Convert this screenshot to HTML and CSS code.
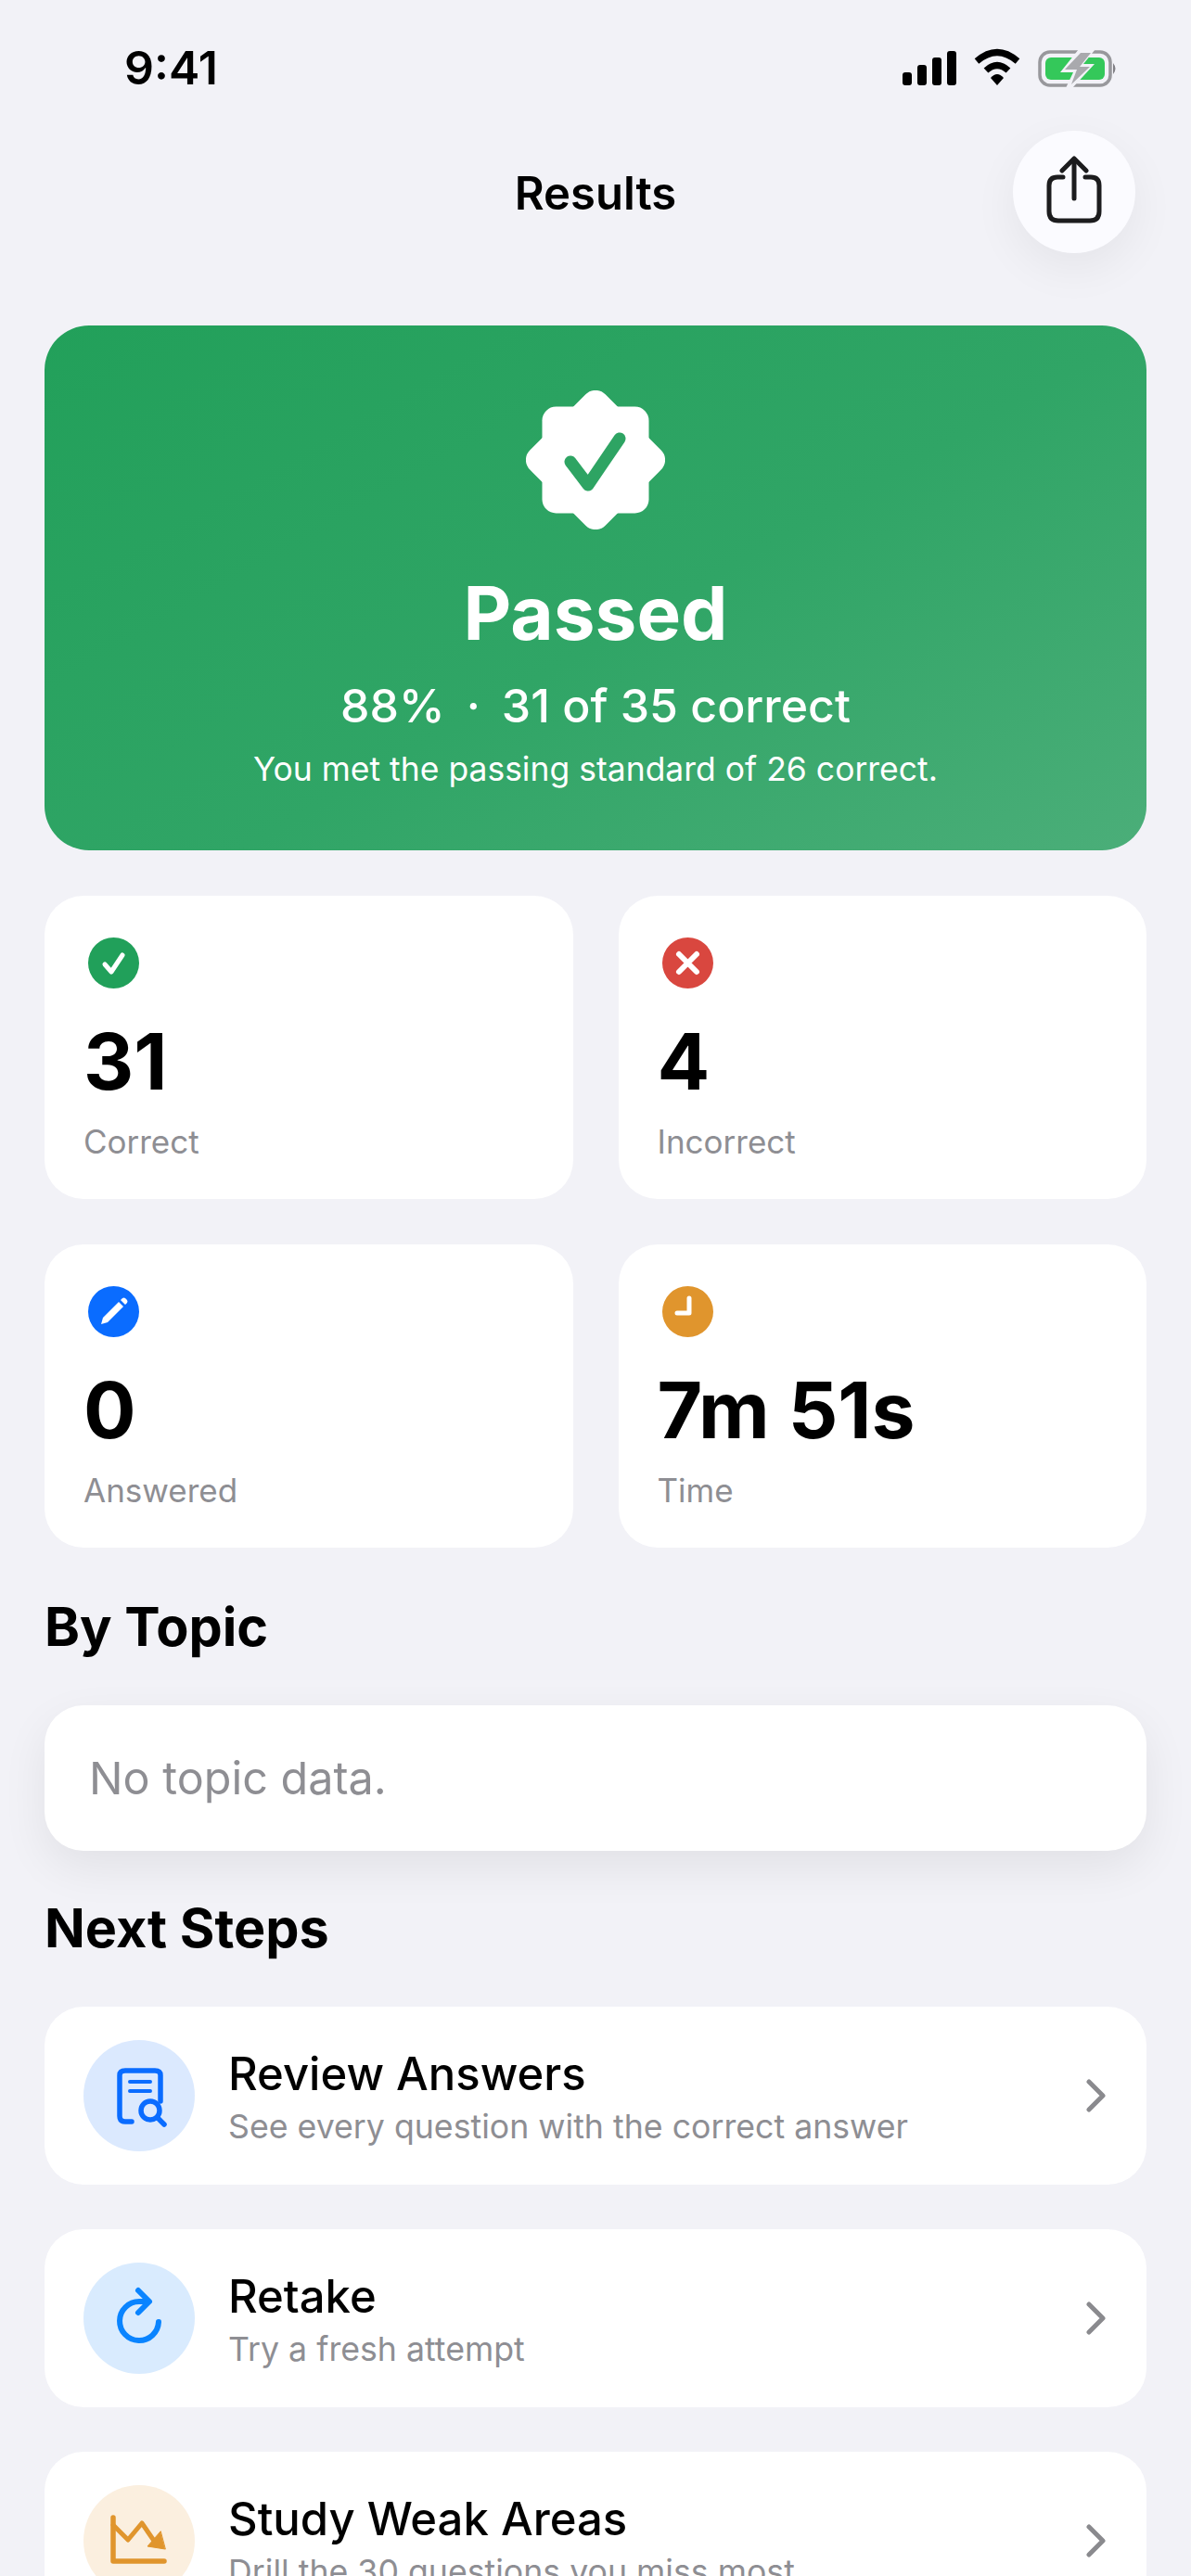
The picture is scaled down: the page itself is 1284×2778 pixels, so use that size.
FILE: index.html
```html
<!DOCTYPE html>
<html lang="en">
<head>
    <meta charset="UTF-8">
    <meta name="viewport" content="width=device-width, initial-scale=1.0">
    <title>Results</title>
    <link rel="stylesheet" href="styles.css">
</head>
<body>
    <div class="statusbar">
        <span class="clock">9:41</span>
        <svg class="status-icons" width="232" height="42" viewBox="0 0 232 42">
            <!-- signal -->
            <rect x="0" y="24" width="10" height="14" rx="3" fill="#000"/>
            <rect x="16" y="16" width="10" height="22" rx="3" fill="#000"/>
            <rect x="32" y="8" width="10" height="30" rx="3" fill="#000"/>
            <rect x="48" y="1" width="10" height="37" rx="3" fill="#000"/>
            <!-- wifi -->
            <path d="M80 12 Q102 -7 124 12" fill="none" stroke="#000" stroke-width="7"/>
            <path d="M90 22 Q102 11 114 22" fill="none" stroke="#000" stroke-width="7"/>
            <path d="M95 30 Q102 22 109 30 L102 38 Z" fill="#000"/>
            <!-- battery -->
            <rect x="148" y="2" width="76" height="36" rx="11" fill="none" stroke="#98989c" stroke-width="3.5"/>
            <rect x="154" y="8" width="64" height="24" rx="6" fill="#34c85a"/>
            <path d="M227 14 Q232 20 227 26 Z" fill="#807f84"/>
            <path d="M190 -1 L208 -1 L195 15 L207 15 L183 41 L176 41 L184 24 L170 24 Z" fill="#f2f2f7"/>
            <path d="M192 3 L203 3 L191 18 L202 18 L182 37 L188 21 L175 21 Z" fill="#a9a9ad"/>
        </svg>
    </div>

    <div class="navbar">
        <span></span>
        <h1>Results</h1>
        <button class="share-btn">
            <svg width="60" height="74" viewBox="0 0 60 74" fill="none" stroke="#1c1c1e" stroke-width="5" stroke-linecap="round" stroke-linejoin="round">
                <path d="M18 23 H12 Q3 23 3 32 V60 Q3 70 13 70 H47 Q57 70 57 60 V32 Q57 23 48 23 H42"/>
                <path d="M30 46 V4"/>
                <path d="M17 16 L30 3 L43 16"/>
            </svg>
        </button>
    </div>

    <main class="content">
        <section class="hero">
            <svg class="hero-badge" width="150" height="150" viewBox="0 0 150 150">
                <rect x="17.5" y="17.5" width="115" height="115" rx="15" fill="#fff"/>
                <rect x="17.5" y="17.5" width="115" height="115" rx="15" fill="#fff" transform="rotate(45 75 75)"/>
                <path d="M48 77 L67 102 L101 52" fill="none" stroke="#2ea463" stroke-width="13" stroke-linecap="round" stroke-linejoin="round"/>
            </svg>
            <div class="hero-title">Passed</div>
            <div class="hero-score">88%<span class="hero-dot">·</span>31 of 35 correct</div>
            <div class="hero-note">You met the passing standard of 26 correct.</div>
        </section>

        <section class="stats">
            <div class="stat-card">
                <svg class="stat-icon" width="55" height="55" viewBox="0 0 55 55">
                    <circle cx="27.5" cy="27.5" r="27.5" fill="#21a05a"/>
                    <path d="M18 29 L25 37 L37 19" fill="none" stroke="#fff" stroke-width="5" stroke-linecap="round" stroke-linejoin="round"/>
                </svg>
                <div class="stat-value">31</div>
                <div class="stat-label">Correct</div>
            </div>
            <div class="stat-card">
                <svg class="stat-icon" width="55" height="55" viewBox="0 0 55 55">
                    <circle cx="27.5" cy="27.5" r="27.5" fill="#d9473f"/>
                    <path d="M18 18 L37 37 M37 18 L18 37" fill="none" stroke="#fff" stroke-width="6" stroke-linecap="round"/>
                </svg>
                <div class="stat-value">4</div>
                <div class="stat-label">Incorrect</div>
            </div>
            <div class="stat-card">
                <svg class="stat-icon" width="55" height="55" viewBox="0 0 55 55">
                    <circle cx="27.5" cy="27.5" r="27.5" fill="#0a6cff"/>
                    <path d="M14 41 L16 34 L33 17 L38 22 L21 39 Z" fill="#fff"/>
                    <path d="M35 15 L37 13 Q38.500 12 40 13 L42 15 Q43 16.500 42 18 L40 20 Z" fill="#fff"/>
                </svg>
                <div class="stat-value">0</div>
                <div class="stat-label">Answered</div>
            </div>
            <div class="stat-card">
                <svg class="stat-icon" width="55" height="55" viewBox="0 0 55 55">
                    <circle cx="27.5" cy="27.500" r="27.5" fill="#e0952d"/>
                    <path d="M29 13 V29 H16" fill="none" stroke="#fff" stroke-width="5" stroke-linecap="round" stroke-linejoin="round"/>
                </svg>
                <div class="stat-value">7m 51s</div>
                <div class="stat-label">Time</div>
            </div>
        </section>

        <h2 class="section-title">By Topic</h2>
        <div class="topic-card">No topic data.</div>

        <h2 class="section-title section-next">Next Steps</h2>
        <div class="steps">
            <div class="step-row">
                <div class="step-icon step-review">
                    <svg width="120" height="120" viewBox="0 0 120 120" fill="none" stroke="#0a6cff" stroke-linecap="round" stroke-linejoin="round">
                        <path d="M52 88 H45 Q39 88 39 82 V38 Q39 33 45 33 H77 Q83 33 83 38 V66" stroke-width="5.500"/>
                        <path d="M50 45 H72 M50 55 H72" stroke-width="4"/>
                        <circle cx="72" cy="76" r="10" stroke-width="5.500"/>
                        <path d="M80 84 L87 91" stroke-width="5.500"/>
                    </svg>
                </div>
                <div class="step-text">
                    <div class="step-title">Review Answers</div>
                    <div class="step-sub">See every question with the correct answer</div>
                </div>
                <svg class="chevron" width="24" height="36" viewBox="0 0 24 36"><path d="M4 3 L19 18 L4 33" fill="none" stroke="#8a8a8e" stroke-width="5" stroke-linecap="round" stroke-linejoin="round"/></svg>
            </div>
            <div class="step-row">
                <div class="step-icon step-retake">
                    <svg width="120" height="120" viewBox="0 0 120 120" fill="none" stroke="#0a84ff" stroke-width="6" stroke-linecap="round" stroke-linejoin="round">
                        <path d="M81 64 A21 21 0 1 1 60 42 H68"/>
                        <path d="M59 30 L71 42 L59 54"/>
                    </svg>
                </div>
                <div class="step-text">
                    <div class="step-title">Retake</div>
                    <div class="step-sub">Try a fresh attempt</div>
                </div>
                <svg class="chevron" width="24" height="36" viewBox="0 0 24 36"><path d="M4 3 L19 18 L4 33" fill="none" stroke="#8a8a8e" stroke-width="5" stroke-linecap="round" stroke-linejoin="round"/></svg>
            </div>
            <div class="step-row">
                <div class="step-icon step-weak">
                    <svg width="120" height="120" viewBox="0 0 120 120" fill="none" stroke="#e0952d" stroke-width="5" stroke-linecap="round" stroke-linejoin="round">
                        <path d="M32 35 V82 H87" stroke-width="5.500"/>
                        <path d="M32 43 L48 59 L63 41 L76 60"/>
                        <path d="M88 69 L69 66 L83 50 Z" fill="#e0952d" stroke-width="1"/>
                    </svg>
                </div>
                <div class="step-text">
                    <div class="step-title">Study Weak Areas</div>
                    <div class="step-sub">Drill the 30 questions you miss most</div>
                </div>
                <svg class="chevron" width="24" height="36" viewBox="0 0 24 36"><path d="M4 3 L19 18 L4 33" fill="none" stroke="#8a8a8e" stroke-width="5" stroke-linecap="round" stroke-linejoin="round"/></svg>
            </div>
        </div>
    </main>
</body>
</html>
```
FILE: styles.css
```css
/* General body styling */
html, body {
    height: 2778px;
    overflow: hidden;
}

body {
    margin: 0;
    font-family: 'Inter', 'Liberation Sans', sans-serif;
    background-color: #f2f2f7;
    color: #000;
}

/* Status bar */
.statusbar {
    height: 141px;
    box-sizing: border-box;
    padding: 45px 79px 0 134px;
    display: flex;
    justify-content: space-between;
    align-items: flex-start;
}

.clock {
    font-size: 50px;
    font-weight: 600;
    line-height: 56px;
}

.status-icons {
    margin-top: 9px;
    overflow: visible;
}

/* Navigation */
.navbar {
    display: grid;
    grid-template-columns: 132px 1fr 132px;
    align-items: center;
    padding: 0 60px;
}

.navbar h1 {
    margin: 2px 0 0;
    text-align: center;
    font-size: 49px;
    font-weight: 600;
}

.share-btn {
    width: 132px;
    height: 132px;
    border: none;
    border-radius: 50%;
    padding: 0 0 4px;
    background-color: #fbfbff;
    box-shadow: 0 16px 50px rgba(0, 0, 0, 0.06);
    display: flex;
    align-items: center;
    justify-content: center;
}

/* Main content */
.content {
    padding: 78px 48px 0;
}

/* Hero banner */
.hero {
    height: 566px;
    box-sizing: border-box;
    padding-top: 70px;
    border-radius: 48px;
    background: linear-gradient(150deg, #22a05a 0%, #30a566 55%, #4bae79 100%);
    color: #fff;
    text-align: center;
}

.hero-badge {
    display: block;
    margin: 0 auto;
}

.hero-title {
    margin-top: 42px;
    font-size: 80px;
    font-weight: 700;
    line-height: 96px;
}

.hero-score {
    margin-top: 22px;
    font-size: 50px;
    font-weight: 500;
    line-height: 60px;
}

.hero-dot {
    margin: 0 23px;
}

.hero-note {
    margin-top: 18px;
    font-size: 35.5px;
    line-height: 42px;
}

/* Stat cards */
.stats {
    margin-top: 49px;
    display: grid;
    grid-template-columns: 1fr 1fr;
    gap: 49px;
}

.stat-card {
    height: 327px;
    box-sizing: border-box;
    padding: 45px 42px 0;
    border-radius: 42px;
    background-color: #fff;
}

.stat-icon {
    display: block;
    margin-left: 5px;
}

.stat-value {
    margin-top: 31px;
    font-size: 84px;
    font-weight: 700;
    line-height: 96px;
}

.stat-label {
    margin-top: 16px;
    font-size: 35px;
    line-height: 44px;
    color: #8e8e93;
}

/* Section headings */
.section-title {
    margin: 49px 0;
    font-size: 57.5px;
    font-weight: 700;
    line-height: 72px;
}

.section-next {
    margin-top: 47px;
}

.topic-card {
    height: 157px;
    box-sizing: border-box;
    padding: 0 48px;
    display: flex;
    align-items: center;
    border-radius: 42px;
    background-color: #fff;
    box-shadow: 0 18px 50px rgba(0, 0, 0, 0.07);
    font-size: 48.5px;
    color: #8e8e93;
}

/* Next steps rows */
.steps {
    display: flex;
    flex-direction: column;
    gap: 48px;
}

.step-row {
    height: 192px;
    box-sizing: border-box;
    padding: 0 42px;
    display: flex;
    align-items: center;
    gap: 36px;
    border-radius: 42px;
    background-color: #fff;
    flex-shrink: 0;
}

.step-icon {
    width: 120px;
    height: 120px;
    border-radius: 50%;
    flex-shrink: 0;
}

.step-icon svg {
    display: block;
}

.step-review {
    background-color: #dbe9fe;
}

.step-retake {
    background-color: #d9ebfe;
}

.step-weak {
    background-color: #fbefdf;
}

.step-text {
    flex: 1;
    margin-top: 3px;
}

.step-title {
    font-size: 49px;
    font-weight: 550;
    line-height: 56px;
}

.step-sub {
    margin-top: 6px;
    font-size: 35.7px;
    line-height: 44px;
    color: #8e8e93;
}

.chevron {
    flex-shrink: 0;
}
```
